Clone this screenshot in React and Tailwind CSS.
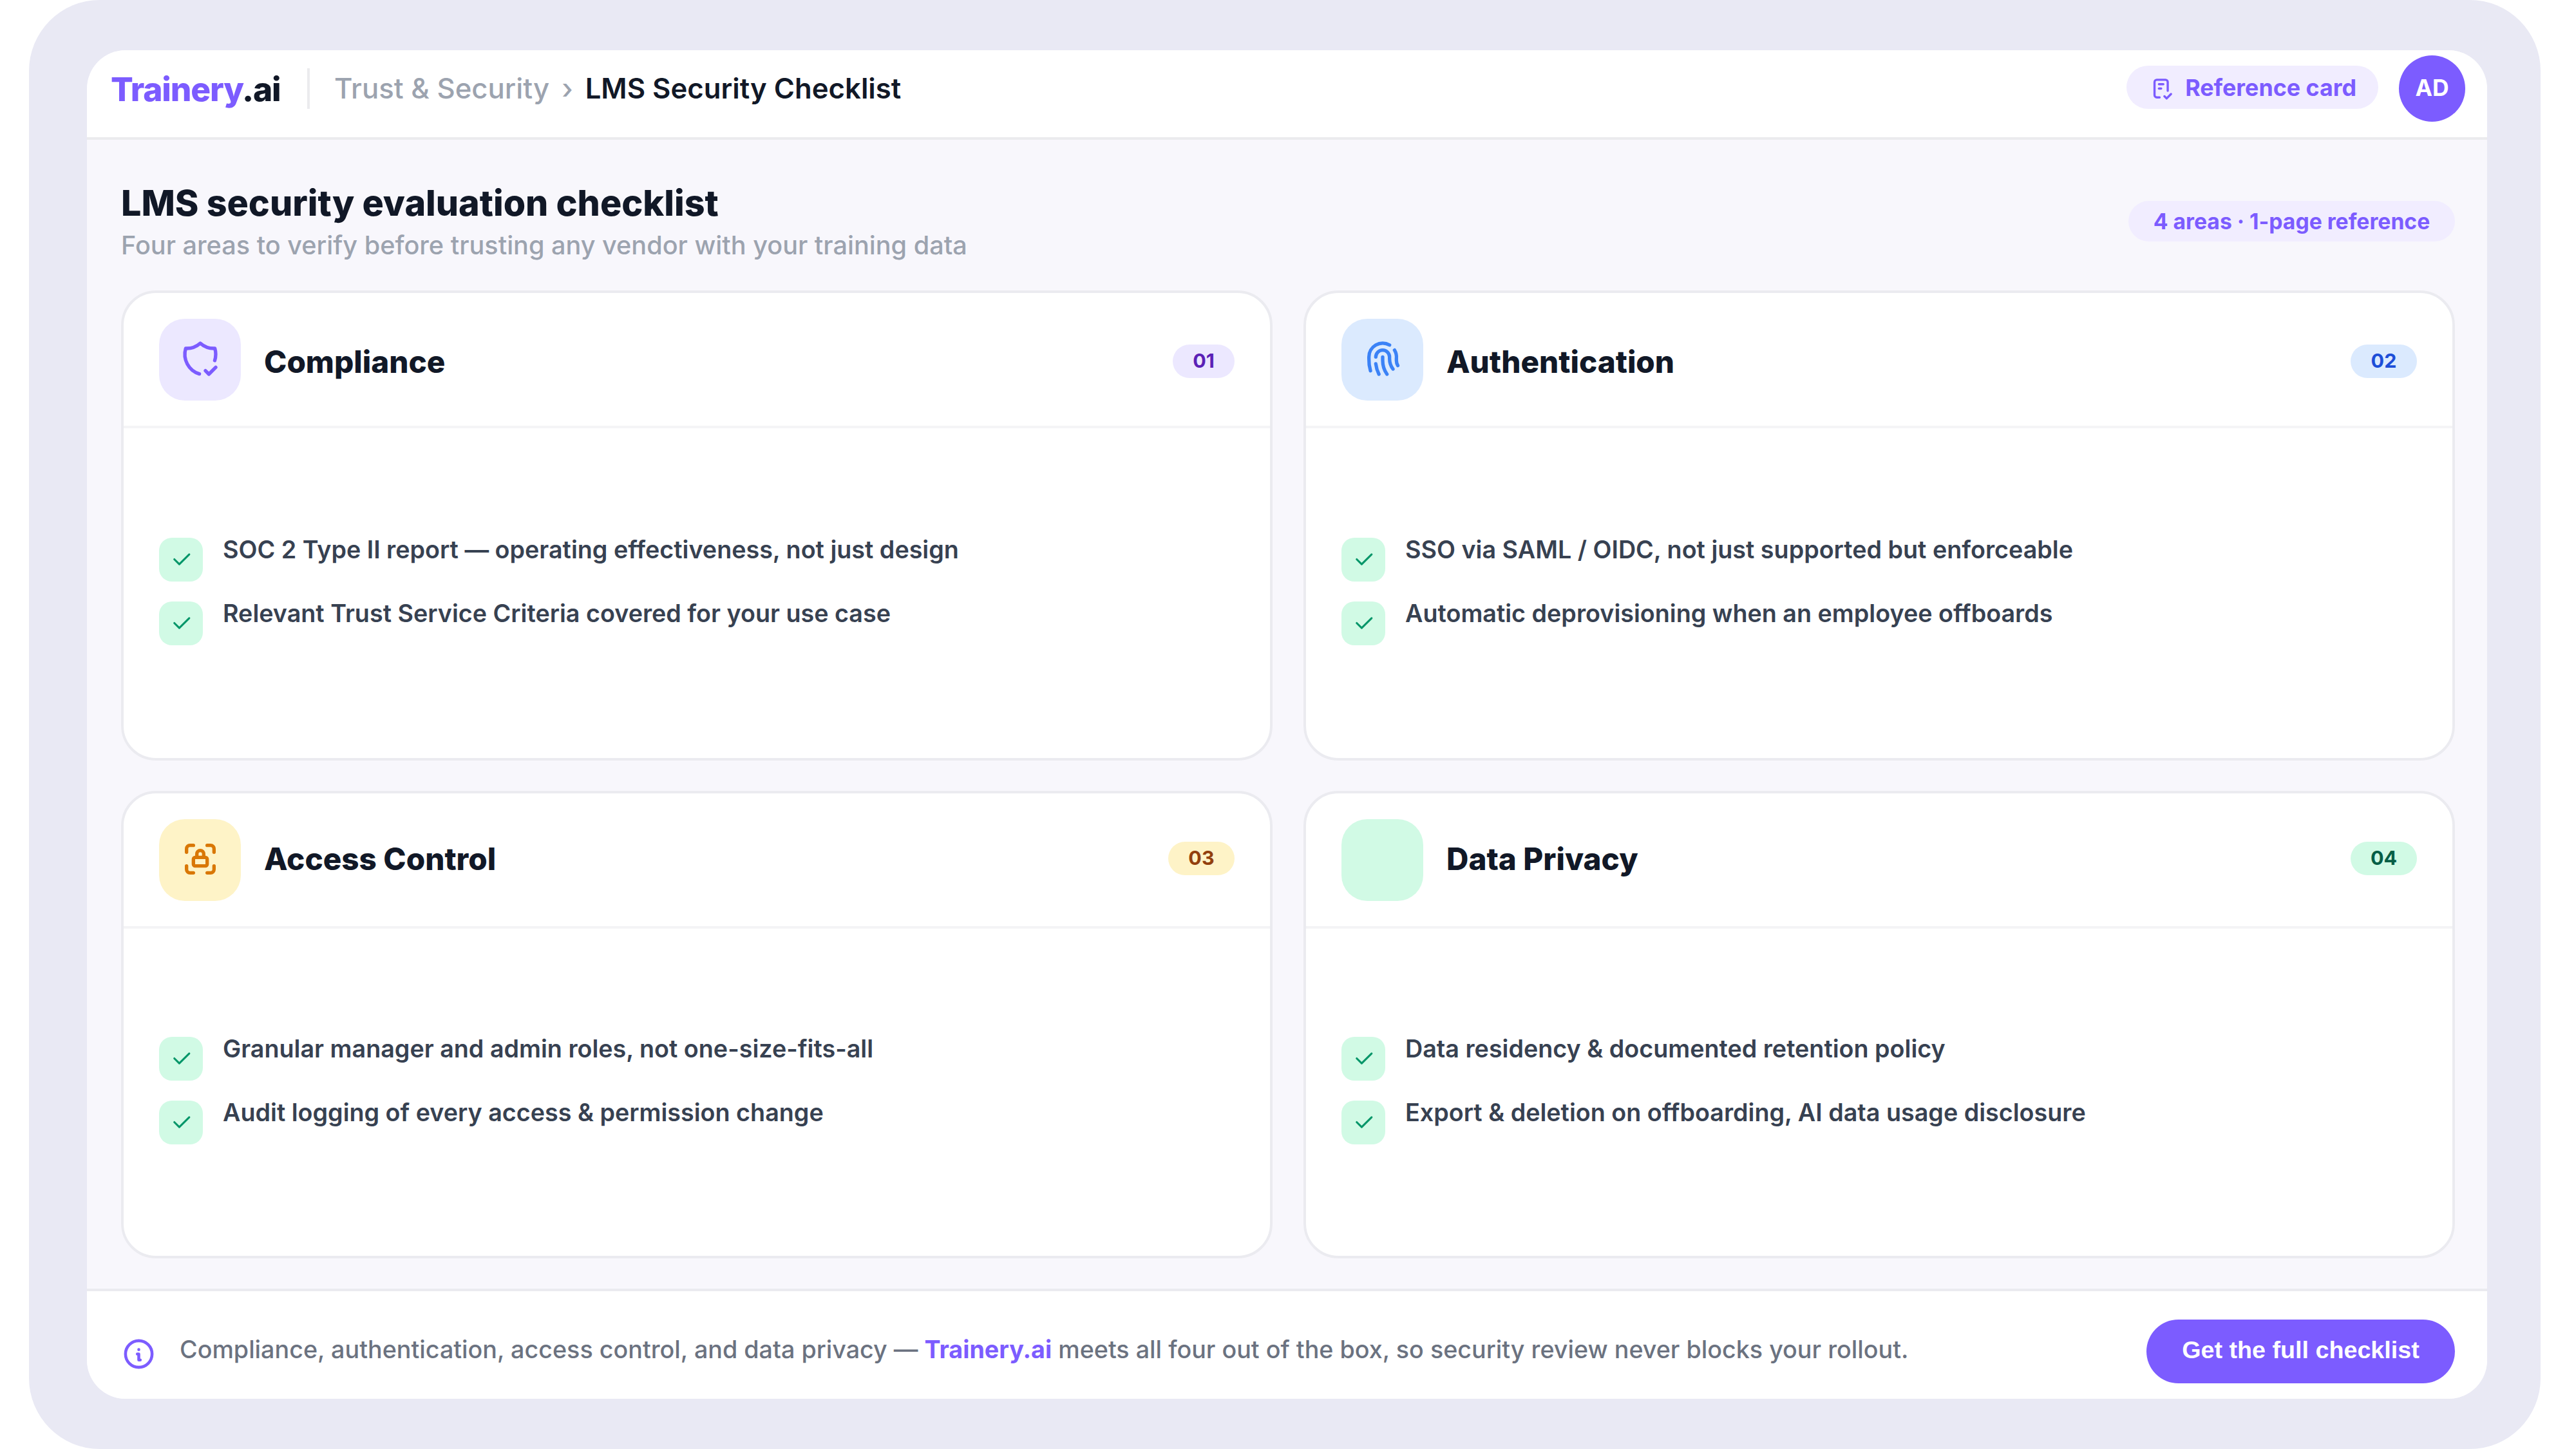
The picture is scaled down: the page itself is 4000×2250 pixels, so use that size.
import React from 'react'
import clsx from 'clsx'
import { TbCheck, TbChecklist, TbFingerprint, TbInfoCircle, TbLockAccess, TbShieldCheck } from 'react-icons/tb'

const areas = [
  {
    number: '01',
    title: 'Compliance',
    icon: TbShieldCheck,
    iconClass: 'bg-[#ece8ff] text-[#7c5cff]',
    badgeClass: 'w-[96px] bg-[#ece8ff] text-[#5b21b6]',
    nudge: 'mt-[5px]',
    items: [
      'SOC 2 Type II report — operating effectiveness, not just design',
      'Relevant Trust Service Criteria covered for your use case',
    ],
  },
  {
    number: '02',
    title: 'Authentication',
    icon: TbFingerprint,
    iconClass: 'bg-[#dbeafe] text-[#3b82f6]',
    badgeClass: 'w-[103px] bg-[#dbeafe] text-[#1d4ed8]',
    nudge: 'mt-[5px]',
    items: [
      'SSO via SAML / OIDC, not just supported but enforceable',
      'Automatic deprovisioning when an employee offboards',
    ],
  },
  {
    number: '03',
    title: 'Access Control',
    icon: TbLockAccess,
    iconClass: 'bg-[#fef3c7] text-[#d97706]',
    badgeClass: 'w-[103px] bg-[#fef3c7] text-[#92400e]',
    nudge: 'mb-[5px]',
    items: [
      'Granular manager and admin roles, not one-size-fits-all',
      'Audit logging of every access & permission change',
    ],
  },
  {
    number: '04',
    title: 'Data Privacy',
    icon: null,
    iconClass: 'bg-[#d1fae5]',
    badgeClass: 'w-[103px] bg-[#d1fae5] text-[#065f46]',
    nudge: 'mb-[5px]',
    items: [
      'Data residency & documented retention policy',
      'Export & deletion on offboarding, AI data usage disclosure',
    ],
  },
]

function TopBar() {
  return (
    <header className="flex h-[139px] shrink-0 items-start justify-between border-b-4 border-[#ebebee] bg-white pt-2 pr-[34px] pl-[37px]">
      <div className="flex h-[103px] items-center">
        <div className="w-[265px] pt-[3px] text-[51.5px] leading-none font-extrabold tracking-[-0.023em] text-[#7c5cff]">
          Trainery<span className="text-[#111827]">.ai</span>
        </div>
        <div className="ml-10 h-[63px] w-1 bg-[#ebebee]" />
        <nav className="ml-[38px] flex items-center gap-[19px] pt-px text-[43.7px] leading-none">
          <span className="font-medium text-[#9ca3af]">Trust & Security</span>
          <span className="font-medium text-[#9ca3af]">›</span>
          <span className="font-semibold text-[#111827]">LMS Security Checklist</span>
        </nav>
      </div>
      <div className="flex h-[103px] items-center gap-8">
        <div className="mb-1 flex h-[67px] items-center gap-[15px] rounded-full bg-[#f1edff] pr-[34px] pl-[35px] text-[#7c5cff]">
          <TbChecklist className="mt-1 size-[41px]" />
          <span className="pt-0.5 text-[35.8px] leading-none font-bold">Reference card</span>
        </div>
        <div className="flex size-[103px] items-center justify-center rounded-full bg-[#7c5cff] pb-0.5 text-[35.5px] leading-none font-bold text-white">
          AD
        </div>
      </div>
    </header>
  )
}

function AreaCard({ area }) {
  const Icon = area.icon
  return (
    <section className="flex flex-col overflow-hidden rounded-[54px] border-4 border-[#ebebf0] bg-white">
      <div className="flex h-[210px] shrink-0 items-center border-b-4 border-[#f4f4f6] px-[55px]">
        <div className={clsx('flex size-[127px] shrink-0 items-center justify-center rounded-[40px] pb-0.5', area.iconClass)}>
          {Icon && <Icon className="size-[64px]" />}
        </div>
        <div className={clsx('ml-[36px] flex flex-1 items-center justify-between', area.nudge)}>
          <h2 className="pt-0.5 text-[47.6px] leading-none font-extrabold text-[#111827]">{area.title}</h2>
          <span className={clsx('flex h-[52px] items-center justify-center rounded-full text-[30.5px] leading-none font-bold', area.badgeClass)}>
            {area.number}
          </span>
        </div>
      </div>
      <ul className="flex flex-1 flex-col justify-center gap-[26px] px-[55px] pb-[11px]">
        {area.items.map((item) => (
          <li key={item} className="flex items-start gap-[31px]">
            <span className="mt-[5px] flex size-[68px] shrink-0 items-center justify-center rounded-[20px] bg-[#d1fae5] text-[#059669]">
              <TbCheck className="size-[37px]" />
            </span>
            <span className="text-[37.7px] leading-[46px] font-semibold text-[#374151]">{item}</span>
          </li>
        ))}
      </ul>
    </section>
  )
}

function BottomBar() {
  return (
    <footer className="flex h-[171px] shrink-0 items-start justify-between border-t-4 border-[#ebebf0] bg-white pt-11 pr-[50px] pl-[53px]">
      <div className="flex h-[99px] items-center">
        <TbInfoCircle className="mt-[7px] size-[55px] text-[#7c5cff]" />
        <p className="mb-[6px] ml-[36px] text-[37.68px] leading-none font-medium text-[#6b7280]">
          Compliance, authentication, access control, and data privacy —{' '}
          <strong className="font-bold text-[#7c5cff]">Trainery.ai</strong> meets all four out of the box, so security
          review never blocks your rollout.
        </p>
      </div>
      <button className="h-[99px] w-[479px] rounded-full bg-[#7c5cff] pb-1 font-['Liberation_Sans',Arial,sans-serif] text-[37.7px] leading-none font-bold text-white">
        Get the full checklist
      </button>
    </footer>
  )
}

function App() {
  return (
    <div className="h-[2250px] w-[4000px] bg-white pr-[55px] pl-[45px] font-[Inter,sans-serif]">
      <div className="h-full rounded-[110px] bg-[#e9e9f4] pt-[78px] pr-[83px] pb-[78px] pl-[90px]">
        <div className="flex h-full flex-col overflow-hidden rounded-[60px] bg-[#f8f7fc]">
          <TopBar />
          <main className="flex flex-1 flex-col pt-[66px] pr-[50px] pb-[47px] pl-[53px]">
            <div className="mb-[47px] flex items-center justify-between">
              <div>
                <h1 className="text-[55.55px] leading-[64px] font-extrabold text-[#111827]">
                  LMS security evaluation checklist
                </h1>
                <p className="mt-[11px] text-[39.62px] leading-[46px] font-medium text-[#9ca3af]">
                  Four areas to verify before trusting any vendor with your training data
                </p>
              </div>
              <span className="flex h-[63px] w-[507px] items-center justify-center rounded-full bg-[#f1edff] text-[33.7px] leading-none font-bold text-[#7c5cff]">
                4 areas · 1-page reference
              </span>
            </div>
            <div className="grid flex-1 grid-cols-2 grid-rows-[730px_726px] gap-x-12 gap-y-[47px]">
              {areas.map((area) => (
                <AreaCard key={area.number} area={area} />
              ))}
            </div>
          </main>
          <BottomBar />
        </div>
      </div>
    </div>
  )
}

export default App
